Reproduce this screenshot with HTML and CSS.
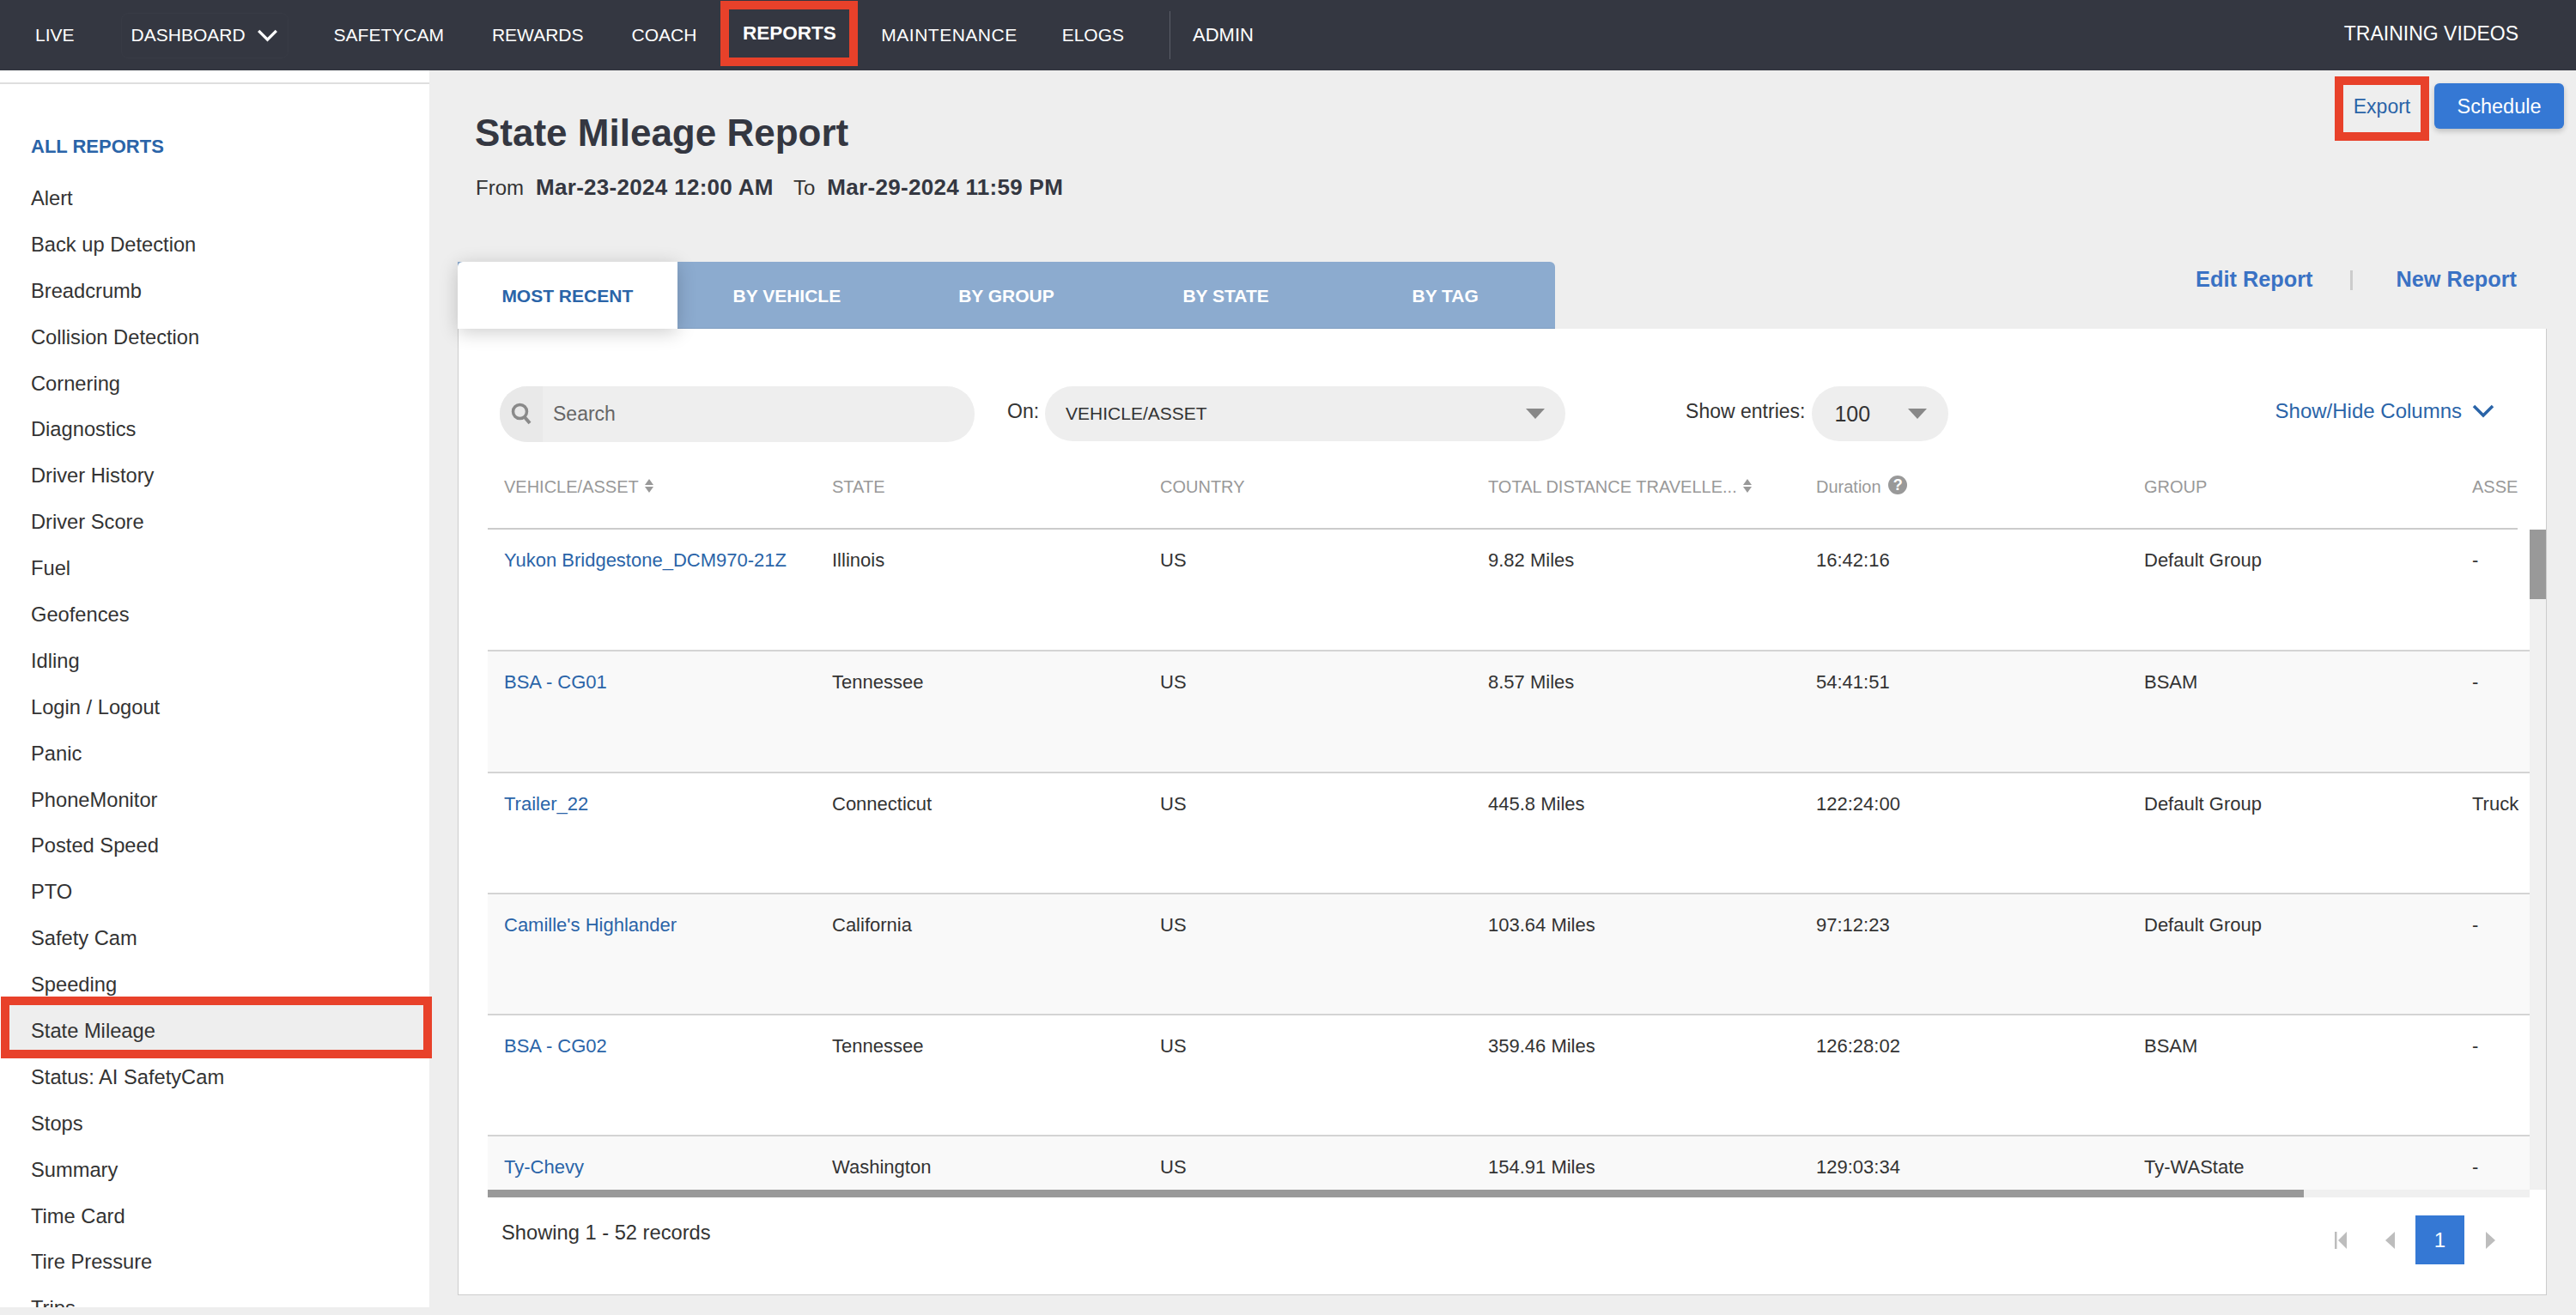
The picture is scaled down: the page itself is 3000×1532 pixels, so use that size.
FILE: index.html
```html
<!DOCTYPE html>
<html lang="en">

<head>
    <meta charset="UTF-8">
    <title>State Mileage Report</title>
    <link rel="stylesheet" href="styles.css">
</head>

<body>

    <nav class="topnav">
        <a class="nav-link nav-live" href="#">LIVE</a>
        <a class="nav-link nav-dash" href="#">DASHBOARD
            <svg class="nav-chevron" viewBox="0 0 26 16"><path d="M2 2 L13 13 L24 2" fill="none" stroke="#fff" stroke-width="3.5"/></svg>
        </a>
        <a class="nav-link" href="#">SAFETYCAM</a>
        <a class="nav-link" href="#">REWARDS</a>
        <a class="nav-link" href="#">COACH</a>
        <a class="nav-link nav-active" href="#">REPORTS</a>
        <a class="nav-link nav-maint" href="#">MAINTENANCE</a>
        <a class="nav-link nav-elogs" href="#">ELOGS</a>
        <span class="nav-divider"></span>
        <a class="nav-link nav-admin" href="#">ADMIN</a>
        <a class="nav-link nav-training" href="#">TRAINING VIDEOS</a>
    </nav>

    <div class="page">
        <aside class="sidebar">
            <h3 class="sidebar-title">ALL REPORTS</h3>
            <ul class="report-list">
                <li><a href="#">Alert</a></li>
                <li><a href="#">Back up Detection</a></li>
                <li><a href="#">Breadcrumb</a></li>
                <li><a href="#">Collision Detection</a></li>
                <li><a href="#">Cornering</a></li>
                <li><a href="#">Diagnostics</a></li>
                <li><a href="#">Driver History</a></li>
                <li><a href="#">Driver Score</a></li>
                <li><a href="#">Fuel</a></li>
                <li><a href="#">Geofences</a></li>
                <li><a href="#">Idling</a></li>
                <li><a href="#">Login / Logout</a></li>
                <li><a href="#">Panic</a></li>
                <li><a href="#">PhoneMonitor</a></li>
                <li><a href="#">Posted Speed</a></li>
                <li><a href="#">PTO</a></li>
                <li><a href="#">Safety Cam</a></li>
                <li><a href="#">Speeding</a></li>
                <li class="selected"><a href="#">State Mileage</a></li>
                <li><a href="#">Status: AI SafetyCam</a></li>
                <li><a href="#">Stops</a></li>
                <li><a href="#">Summary</a></li>
                <li><a href="#">Time Card</a></li>
                <li><a href="#">Tire Pressure</a></li>
                <li><a href="#">Trips</a></li>
            </ul>
        </aside>

        <main class="content">
            <div class="report-head">
                <div class="report-info">
                    <h1>State Mileage Report</h1>
                    <p class="date-range">
                        <span>From</span><b>Mar-23-2024 12:00 AM</b>
                        <span>To</span><b>Mar-29-2024 11:59 PM</b>
                    </p>
                </div>
                <div class="report-actions">
                    <a class="btn-export" href="#">Export</a>
                    <a class="btn-schedule" href="#">Schedule</a>
                </div>
            </div>

            <div class="tab-row">
                <div class="tabs">
                    <a class="tab tab-active" href="#">MOST RECENT</a>
                    <a class="tab" href="#">BY VEHICLE</a>
                    <a class="tab" href="#">BY GROUP</a>
                    <a class="tab" href="#">BY STATE</a>
                    <a class="tab" href="#">BY TAG</a>
                </div>
                <div class="report-links">
                    <a href="#">Edit Report</a>
                    <span class="link-sep"></span>
                    <a href="#">New Report</a>
                </div>
            </div>

            <section class="panel">
                <div class="filters">
                    <div class="search-box">
                        <span class="search-icon">
                            <svg viewBox="0 0 24 26" width="24" height="26"><circle cx="10.5" cy="10.5" r="8" fill="none" stroke="#8a8a8a" stroke-width="3.5"/><path d="M16 17 L22 24" stroke="#8a8a8a" stroke-width="4"/></svg>
                        </span>
                        <span class="search-text">Search</span>
                    </div>
                    <label class="filter-label on-label">On:</label>
                    <div class="select select-on"><span>VEHICLE/ASSET</span><i class="caret"></i></div>
                    <label class="filter-label entries-label">Show entries:</label>
                    <div class="select select-entries"><span>100</span><i class="caret"></i></div>
                    <a class="columns-toggle" href="#">Show/Hide Columns
                        <svg viewBox="0 0 26 16" width="26" height="16"><path d="M2 2 L13 13 L24 2" fill="none" stroke="#2a64a8" stroke-width="3.5"/></svg>
                    </a>
                </div>

                <div class="table-area">
                    <div class="head-clip">
                        <table class="report-table table-head">
                            <thead>
                                <tr>
                                    <th>VEHICLE/ASSET <i class="sort"></i></th>
                                    <th>STATE</th>
                                    <th>COUNTRY</th>
                                    <th>TOTAL DISTANCE TRAVELLE... <i class="sort"></i></th>
                                    <th>Duration <span class="help">?</span></th>
                                    <th>GROUP</th>
                                    <th>ASSE</th>
                                </tr>
                            </thead>
                        </table>
                    </div>

                    <div class="table-scroll">
                        <div class="table-clip">
                            <table class="report-table table-body">
                                <tbody>
                                    <tr>
                                        <td><a href="#">Yukon Bridgestone_DCM970-21Z</a></td>
                                        <td>Illinois</td><td>US</td><td>9.82 Miles</td><td>16:42:16</td><td>Default Group</td><td>-</td>
                                    </tr>
                                    <tr>
                                        <td><a href="#">BSA - CG01</a></td>
                                        <td>Tennessee</td><td>US</td><td>8.57 Miles</td><td>54:41:51</td><td>BSAM</td><td>-</td>
                                    </tr>
                                    <tr>
                                        <td><a href="#">Trailer_22</a></td>
                                        <td>Connecticut</td><td>US</td><td>445.8 Miles</td><td>122:24:00</td><td>Default Group</td><td>Truck</td>
                                    </tr>
                                    <tr>
                                        <td><a href="#">Camille's Highlander</a></td>
                                        <td>California</td><td>US</td><td>103.64 Miles</td><td>97:12:23</td><td>Default Group</td><td>-</td>
                                    </tr>
                                    <tr>
                                        <td><a href="#">BSA - CG02</a></td>
                                        <td>Tennessee</td><td>US</td><td>359.46 Miles</td><td>126:28:02</td><td>BSAM</td><td>-</td>
                                    </tr>
                                    <tr>
                                        <td><a href="#">Ty-Chevy</a></td>
                                        <td>Washington</td><td>US</td><td>154.91 Miles</td><td>129:03:34</td><td>Ty-WAState</td><td>-</td>
                                    </tr>
                                </tbody>
                            </table>
                        </div>
                        <div class="vscroll"><div class="vscroll-thumb"></div></div>
                    </div>
                    <div class="hscroll"><div class="hscroll-thumb"></div></div>
                </div>

                <div class="table-foot">
                    <span class="record-count">Showing 1 - 52 records</span>
                    <div class="pager">
                        <svg class="pager-first" viewBox="0 0 14 20" width="14" height="20"><rect x="0" y="0" width="2.5" height="20" fill="#bdbdbd"/><path d="M14 0 V20 L4 10 Z" fill="#bdbdbd"/></svg>
                        <svg class="pager-prev" viewBox="0 0 11 20" width="11" height="20"><path d="M11 0 V20 L0 10 Z" fill="#bdbdbd"/></svg>
                        <span class="pager-num">1</span>
                        <svg class="pager-next" viewBox="0 0 11 20" width="11" height="20"><path d="M0 0 V20 L11 10 Z" fill="#bdbdbd"/></svg>
                    </div>
                </div>
            </section>
        </main>
    </div>

</body>
</html>
```

FILE: styles.css
```css
* {
    box-sizing: border-box;
}

html, body {
    margin: 0;
    height: 1532px;
    overflow: hidden;
}

body {
    font-family: "Liberation Sans", Arial, sans-serif;
    background-color: #eeeeee;
    color: #333;
}

a {
    text-decoration: none;
    color: inherit;
}

/* top bar */
.topnav {
    display: flex;
    align-items: center;
    height: 82px;
    padding: 0 67px 0 13px;
    background-color: #343741;
    color: #fff;
    font-size: 21px;
}

.nav-link {
    display: flex;
    align-items: center;
    padding: 0 28px;
}

.nav-dash {
    height: 53px;
    margin: 0 25px 0 26px;
    padding: 0 11px;
    border: 1px solid #383b45;
    border-radius: 8px;
}

.nav-chevron {
    width: 25px;
    height: 15px;
    margin-left: 13px;
}

.nav-active {
    justify-content: center;
    width: 160px;
    height: 76px;
    margin-top: -4px;
    padding: 0;
    font-size: 22.5px;
    font-weight: bold;
    border: 10px solid #e8412a;
}

.nav-maint {
    padding: 0 26px 0 27px;
    letter-spacing: 0.5px;
}

.nav-elogs {
    padding: 0 0 0 26px;
}

.nav-divider {
    width: 1px;
    height: 56px;
    margin: 0 0 0 53px;
    background-color: #5b5e68;
}

.nav-admin {
    padding: 0 0 0 26px;
    font-size: 22px;
}

.nav-training {
    position: relative;
    top: -2px;
    margin-left: auto;
    padding: 0;
    font-size: 23px;
}

/* left list */
.page {
    display: flex;
    height: 1450px;
}

.sidebar {
    flex: none;
    width: 500px;
    height: 1441px;
    padding-top: 14px;
    background-color: #fff;
    clip-path: inset(0 -10px 0 0);
}

.sidebar-title {
    margin: 0;
    padding: 60px 0 0 36px;
    height: 109px;
    border-top: 2px solid #dedede;
    color: #2a64a8;
    font-size: 22px;
    line-height: 26px;
    font-weight: bold;
}

.report-list {
    list-style: none;
    margin: 0;
    padding: 0;
    font-size: 23.7px;
}

.report-list li {
    position: relative;
    height: 53.9px;
    line-height: 53.9px;
    padding-left: 36px;
}

.report-list li.selected a {
    position: relative;
    z-index: 1;
}

/* red box round the picked report */
.report-list li.selected::after {
    content: "";
    position: absolute;
    top: -14px;
    bottom: -4px;
    left: 1px;
    right: -3px;
    background-color: #eeeeee;
    border: 10px solid #e8412a;
}

/* main column */
.content {
    flex: 1;
    min-width: 0;
    padding-right: 14px;
}

.report-head {
    display: flex;
    justify-content: space-between;
    height: 223px;
    padding-left: 53px;
}

.report-info h1 {
    margin: 45px 0 0;
    font-size: 44px;
    line-height: 56px;
    font-weight: bold;
    color: #343741;
}

.date-range {
    margin: 20px 0 0;
    font-size: 24px;
    line-height: 30px;
    padding-left: 1px;
}

.date-range span {
    margin-right: 14px;
}

.date-range b {
    margin-right: 17px;
    color: #343741;
    font-size: 26px;
    letter-spacing: 0.3px;
}

.report-actions {
    display: flex;
    align-items: flex-start;
    gap: 6px;
    padding-top: 7px;
}

.btn-export {
    display: flex;
    align-items: center;
    justify-content: center;
    width: 110px;
    height: 75px;
    padding-bottom: 4px;
    border: 10px solid #e8412a;
    color: #2a64a8;
    font-size: 23px;
}

.btn-schedule {
    display: flex;
    align-items: center;
    justify-content: center;
    width: 151px;
    height: 53px;
    margin-top: 8px;
    padding-top: 2px;
    background-color: #3578d4;
    border-radius: 6px;
    box-shadow: 0 3px 6px rgba(0, 0, 0, 0.2);
    color: #fff;
    font-size: 23.5px;
}

.tab-row {
    display: flex;
    justify-content: space-between;
    height: 78px;
    padding-left: 33px;
    padding-right: 55px;
}

.tabs {
    display: flex;
    width: 1278px;
    background-color: #8cabcf;
    border-radius: 0 6px 0 0;
    border-bottom: 1px solid #7e9cc0;
}

.tab {
    display: flex;
    align-items: center;
    justify-content: center;
    width: 256px;
    padding-top: 2px;
    color: #fff;
    font-size: 21px;
    font-weight: bold;
}

.tab-active {
    position: relative;
    height: 78px;
    background-color: #fff;
    color: #2a64a8;
    border-radius: 6px 0 0 0;
    box-shadow: 0 4px 22px rgba(0, 0, 0, 0.2);
}

.report-links {
    display: flex;
    align-items: flex-start;
    padding-top: 6px;
    color: #3a72c4;
    font-size: 25.3px;
    font-weight: bold;
}

.link-sep {
    width: 3px;
    height: 23px;
    margin: 4px 50px 0 44px;
    background-color: #cccccc;
}

/* white panel */
.panel {
    width: 2433px;
    height: 1126px;
    margin-left: 33px;
    padding-top: 67px;
    background-color: #fff;
    border: 1px solid #cccccc;
    border-top: 0;
}

.filters {
    display: flex;
    align-items: center;
    height: 64px;
    margin-left: 48px;
    font-size: 23px;
}

.search-box {
    display: flex;
    align-items: center;
    width: 553px;
    height: 65px;
    background-color: #eeeeee;
    border-radius: 32px;
    overflow: hidden;
}

.search-icon {
    display: flex;
    align-items: center;
    justify-content: center;
    width: 50px;
    height: 100%;
    background-color: #e9e9e9;
}

.search-text {
    margin-left: 12px;
    color: #666;
}

.filter-label {
    color: #333;
}

.on-label {
    position: relative;
    top: -3px;
    margin: 0 7px 0 38px;
}

.select {
    display: flex;
    align-items: center;
    justify-content: space-between;
    height: 64px;
    background-color: #eeeeee;
    border-radius: 32px;
}

.select-on {
    width: 606px;
    padding: 0 24px 0 24px;
    font-size: 21px;
}

.entries-label {
    position: relative;
    top: -3px;
    margin: 0 8px 0 140px;
}

.select-entries {
    width: 159px;
    padding: 0 25px 0 26px;
    font-size: 25px;
}

.caret {
    width: 0;
    height: 0;
    border-left: 11px solid transparent;
    border-right: 11px solid transparent;
    border-top: 12px solid #888888;
}

.columns-toggle {
    display: flex;
    align-items: center;
    gap: 12px;
    margin-top: -6px;
    margin-left: auto;
    margin-right: 60px;
    color: #2a64a8;
    font-size: 24px;
}

.table-area {
    margin-left: 34px;
}

.report-table {
    border-collapse: collapse;
    table-layout: fixed;
    width: 2674px;
    font-size: 22px;
}

.report-table th,
.report-table td {
    width: 382px;
    padding: 0 0 0 19px;
    text-align: left;
    white-space: nowrap;
    overflow: hidden;
}

.head-clip {
    width: 2364px;
    height: 103px;
    overflow: hidden;
    border-bottom: 2px solid #cccccc;
}

.table-head th {
    height: 101px;
    padding-top: 5px;
    font-size: 20px;
    font-weight: normal;
    color: #999999;
}

/* little up and down arrows beside a sortable header */
.sort {
    display: inline-block;
    position: relative;
    top: -2px;
    width: 11px;
    height: 16px;
    margin-left: 2px;
    vertical-align: middle;
}

.sort::before,
.sort::after {
    content: "";
    position: absolute;
    left: 0;
    border-left: 5.5px solid transparent;
    border-right: 5.5px solid transparent;
}

.sort::before {
    top: 0;
    border-bottom: 7px solid #999999;
}

.sort::after {
    bottom: 0;
    border-top: 7px solid #999999;
}

.help {
    display: inline-block;
    position: relative;
    top: -3px;
    width: 22px;
    height: 22px;
    margin-left: 3px;
    border-radius: 50%;
    background-color: #999999;
    color: #fff;
    font-size: 18px;
    font-weight: bold;
    line-height: 22px;
    text-align: center;
}

.table-scroll {
    display: flex;
    height: 769px;
}

.table-clip {
    flex: none;
    width: 2378px;
    overflow: hidden;
}

.table-body tr {
    height: 141.3px;
    border-bottom: 2px solid #d4d4d4;
}

.table-body tr:nth-child(even) {
    background-color: #f9f9f9;
}

.table-body td {
    vertical-align: top;
    padding-top: 23px;
    line-height: 26px;
    color: #333;
}

.table-body td a {
    color: #2a64a8;
}

.vscroll {
    flex: none;
    width: 19px;
    background-color: #f0f0f0;
}

.vscroll-thumb {
    width: 100%;
    height: 81px;
    background-color: #999999;
}

.hscroll {
    width: 2378px;
    height: 9px;
    background-color: #f0f0f0;
}

.hscroll-thumb {
    width: 2115px;
    height: 100%;
    background-color: #999999;
}

.table-foot {
    display: flex;
    justify-content: space-between;
    align-items: flex-start;
    padding: 21px 59px 0 50px;
    font-size: 23.7px;
}

.record-count {
    margin-top: 7px;
}

.pager {
    display: flex;
    align-items: center;
    height: 57px;
}

.pager-first {
    margin-right: 45px;
}

.pager-prev {
    margin-right: 24px;
}

.pager-num {
    width: 57px;
    height: 57px;
    margin-right: 25px;
    background-color: #3578d4;
    color: #fff;
    font-size: 24px;
    line-height: 57px;
    text-align: center;
}
```
